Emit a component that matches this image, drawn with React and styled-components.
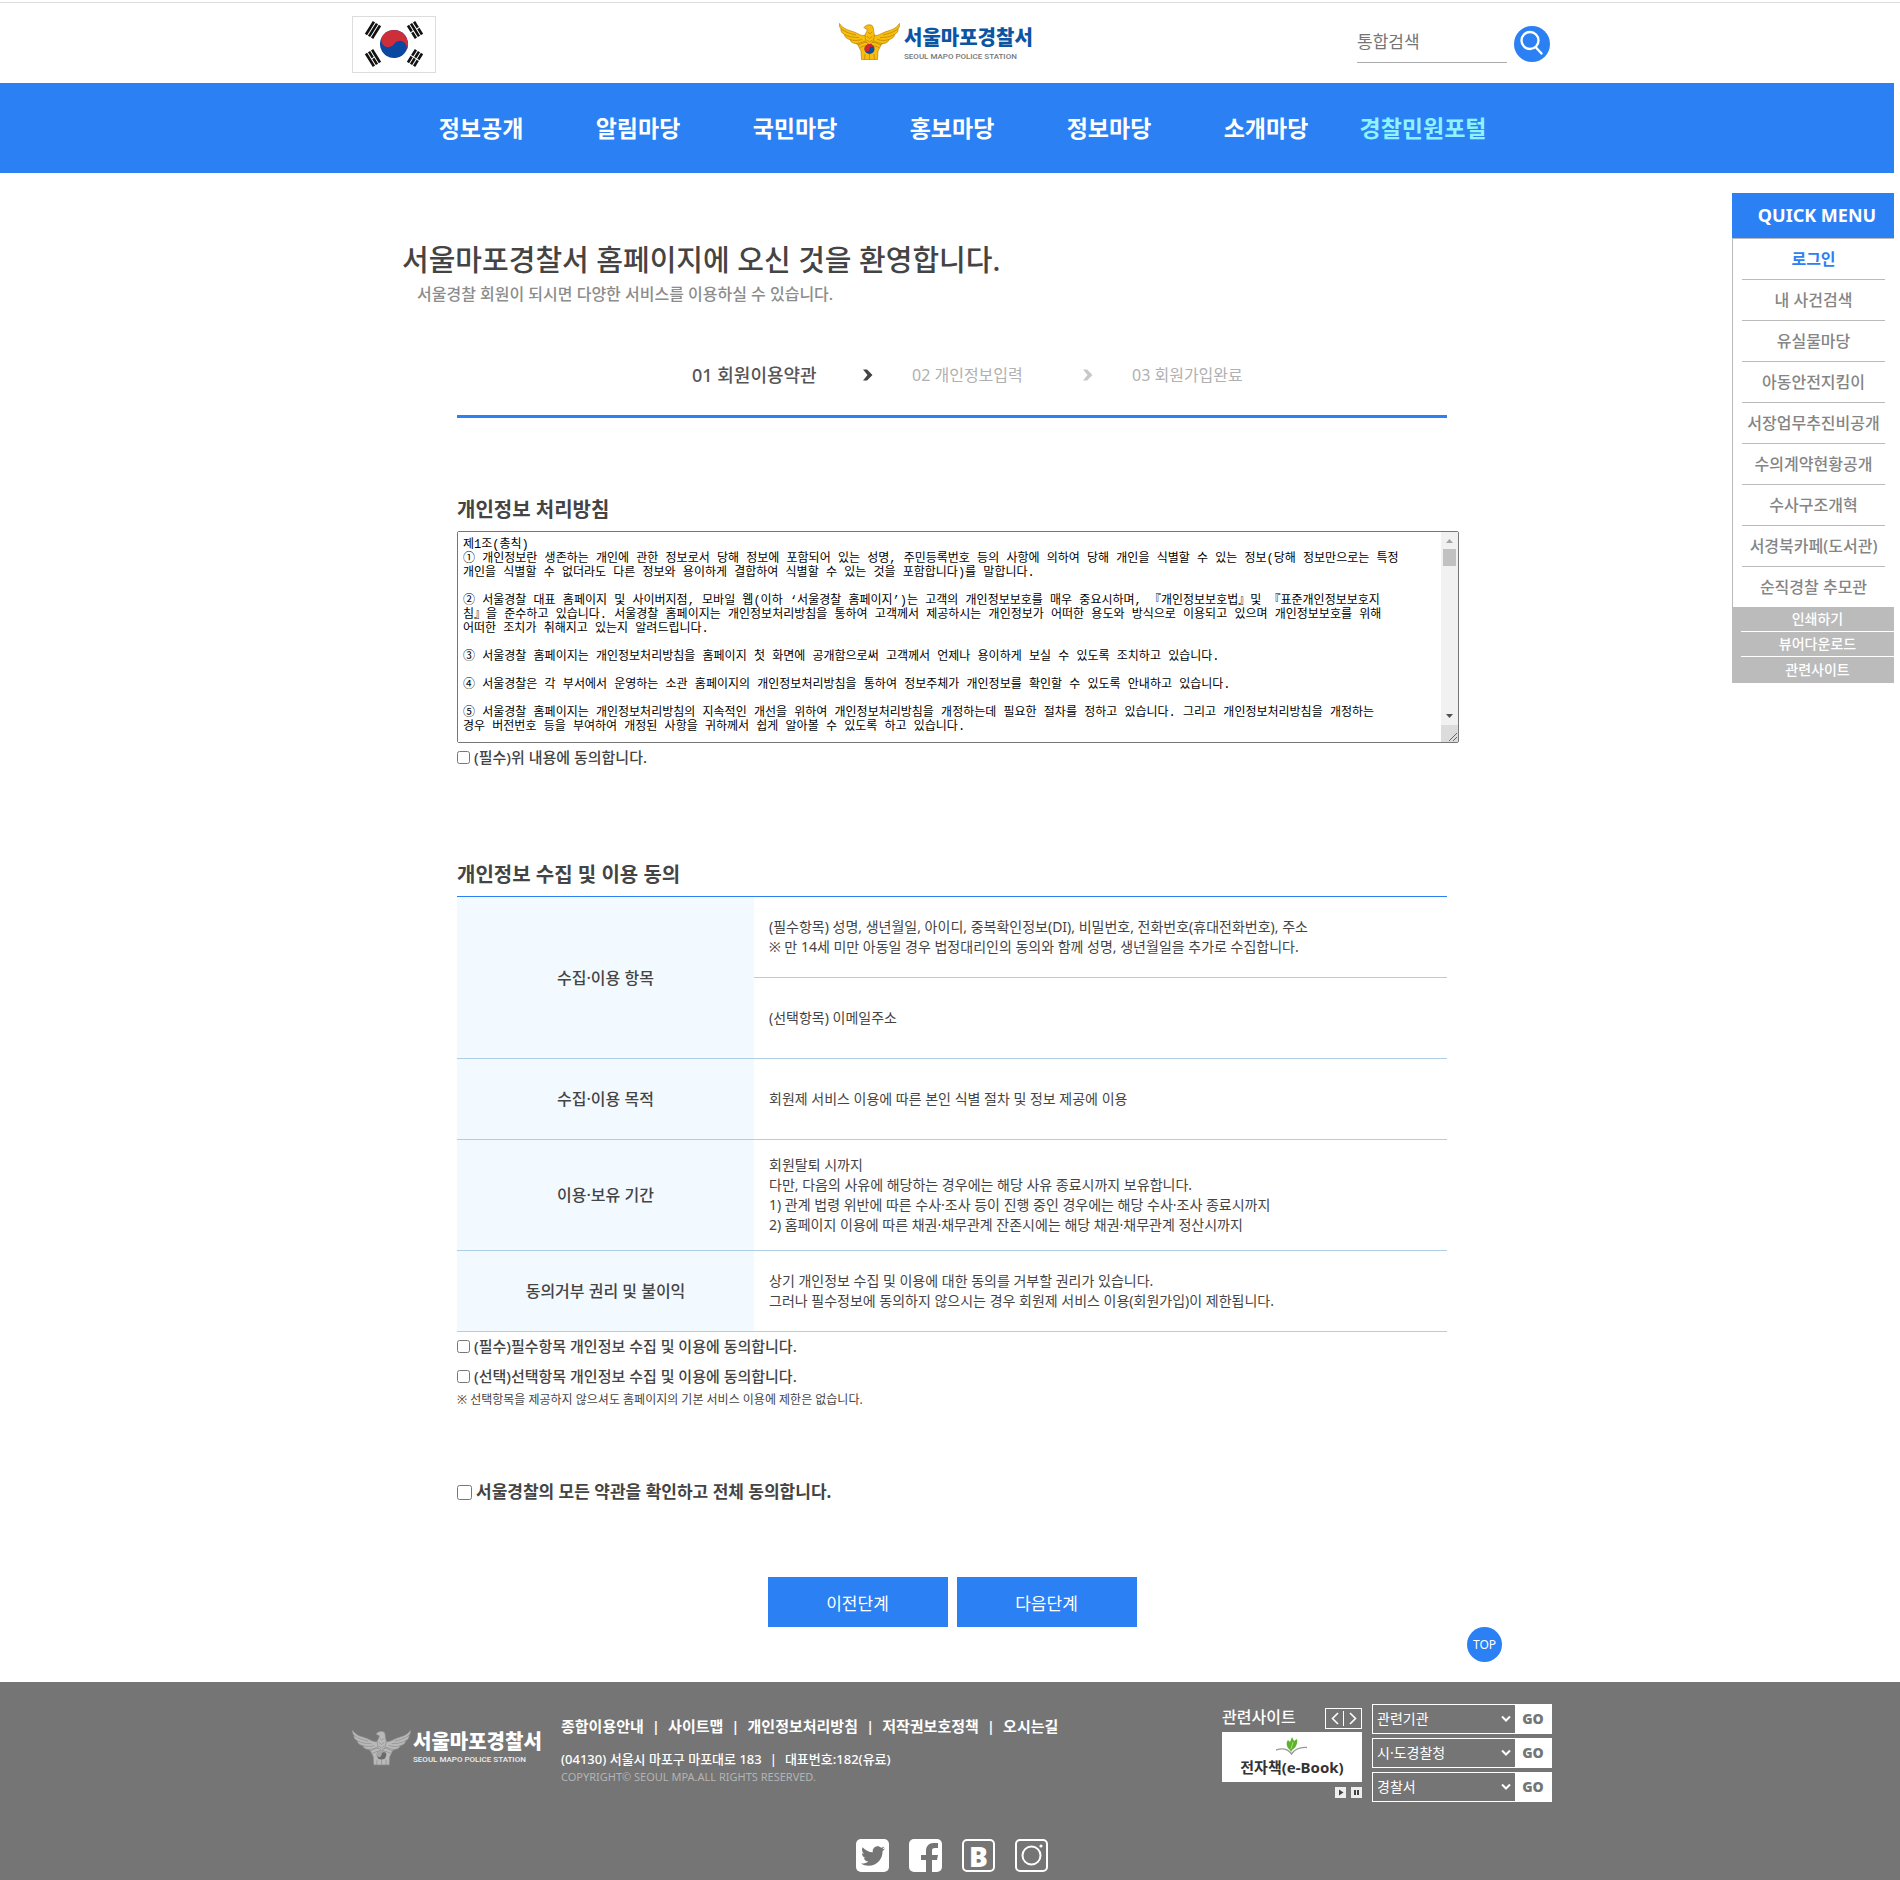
import React from "react";
import styled, { createGlobalStyle } from "styled-components";
import { FaTwitter } from "react-icons/fa";

const blue = "#2b80f3";
const slate = "#757575";
const sans = `"Noto Sans", "Noto Sans CJK KR", sans-serif`;

const GlobalStyle = createGlobalStyle`
  *, *::before, *::after { box-sizing: border-box; }
  body { margin: 0; background: #fff; color: #444; font-family: ${sans}; font-size: 14px; }
  a { color: inherit; text-decoration: none; }
  ul, h1, h2, h3, p { margin: 0; padding: 0; }
  ul { list-style: none; }
  button, input, select, textarea { font-family: inherit; margin: 0; border-radius: 0; }
  button { cursor: pointer; border: 0; padding: 0; }
`;

const Page = styled.div`
  position: relative;
  padding-top: 2px;
`;

const Inner = styled.div`
  width: 100%;
  max-width: 1204px;
  margin: 0 auto;
  padding-left: 4px;
`;

/* ---------- header ---------- */

const Header = styled.header`
  border-top: 1px solid #dcdcdc;
`;

const HeaderRow = styled(Inner)`
  display: grid;
  grid-template-columns: 487px 1fr auto;
  align-items: start;
  height: 80px;
`;

const FlagBox = styled.div`
  width: 84px;
  height: 57px;
  margin-top: 13px;
  border: 1px solid #dcdcdc;
  svg { display: block; }
`;

const Brand = styled.a`
  display: flex;
  gap: ${(p) => (p.$footer ? 2 : 4)}px;
  margin-top: ${(p) => (p.$footer ? 25 : 20)}px;
  color: ${(p) => (p.$footer ? "#fff" : "#0b55a3")};
  svg { flex: none; }
`;

const BrandText = styled.span`
  display: flex;
  flex-direction: column;
  white-space: nowrap;
`;

const BrandName = styled.strong`
  font-size: 20px;
  line-height: ${(p) => (p.$footer ? 26 : 29)}px;
  font-weight: 800;
`;

const BrandSub = styled.span`
  font-family: Roboto, sans-serif;
  font-size: 8px;
  line-height: 10px;
  font-weight: 500;
  color: ${(p) => (p.$footer ? "#eee" : "#777")};
`;

const Search = styled.form`
  display: flex;
  justify-content: flex-end;
  gap: 7px;
  margin-top: 23px;
  padding-right: 2px;
`;

const SearchInput = styled.input`
  width: 150px;
  height: 37px;
  padding: 0 0 5px;
  border: 0;
  border-bottom: 1px solid #aaa;
  background: none;
  font-size: 17px;
  &::placeholder { color: #757575; opacity: 1; }
`;

const SearchButton = styled.button`
  width: 36px;
  height: 36px;
  border-radius: 50%;
  background: ${blue};
  svg { display: block; }
`;

const Nav = styled.nav`
  background: linear-gradient(${blue}, ${blue}) 0 0 / calc(100% - 6px) 100% no-repeat;
`;

const NavList = styled.ul`
  display: grid;
  grid-template-columns: repeat(7, 157px);
  justify-content: center;
`;

const NavLink = styled.a`
  display: block;
  text-align: center;
  font-size: 23px;
  line-height: 90px;
  font-weight: 600;
  color: ${(p) => (p.$accent ? "#8df3ff" : "#fff")};
`;

/* ---------- quick menu ---------- */

const Quick = styled.aside`
  position: absolute;
  top: 193px;
  right: 6px;
  width: 162px;
  text-align: center;
`;

const QuickTitle = styled.h2`
  padding-left: 8px;
  background: ${blue};
  color: #fff;
  font-size: 18px;
  line-height: 45px;
  font-weight: 700;
`;

const QuickList = styled.ul`
  padding: 0 9px;
  border-left: 1px solid #bbb;
  border-top: 1px solid #bbb;
  background: #fff;
`;

const QuickItem = styled.li`
  border-bottom: 1px solid #bbb;
  font-size: 16px;
  line-height: 40px;
  font-weight: ${(p) => (p.$active ? 700 : 500)};
  color: ${(p) => (p.$active ? blue : "#858585")};
  white-space: nowrap;
  &:last-child { border-bottom: 0; }
`;

const QuickTools = styled.ul`
  padding-left: 9px;
  background: #bbb;
  color: #fff;
`;

const QuickTool = styled.li`
  border-bottom: 1px solid #fff;
  font-size: 14px;
  line-height: 24px;
  font-weight: 500;
  &:last-child { border-bottom: 0; line-height: 26px; }
`;

/* ---------- main ---------- */

const Intro = styled.div`
  padding: 67px 50px 0;
`;

const Title = styled.h1`
  font-size: 29px;
  line-height: 40px;
  font-weight: 500;
`;

const Lead = styled.p`
  padding-left: 15px;
  font-size: 16px;
  line-height: 28px;
  font-weight: 500;
  color: #8c8c8c;
`;

const Content = styled.div`
  margin: 55px 105px 0;
`;

const Steps = styled.ol`
  display: flex;
  margin: 0;
  padding: 0 0 28px 235px;
  list-style: none;
  border-bottom: 3px solid ${blue};
`;

const Step = styled.li`
  display: flex;
  align-items: center;
  justify-content: space-between;
  width: ${(p) => (p.$last ? "auto" : "220px")};
  padding-right: ${(p) => (p.$last ? 0 : 39)}px;
  font-size: ${(p) => (p.$active ? 18 : 16)}px;
  line-height: 24px;
  font-weight: ${(p) => (p.$active ? 500 : 400)};
  color: ${(p) => (p.$active ? "#555" : "#b0b0b0")};
  white-space: nowrap;
`;

const Section = styled.section`
  padding-top: ${(p) => p.$gap}px;
`;

const SectionTitle = styled.h2`
  margin-bottom: 6px;
  font-size: 20px;
  line-height: 30px;
  font-weight: 600;
`;

const TermsBox = styled.div`
  display: flex;
  height: 212px;
  margin-right: -12px;
  border: 1px solid #767676;
  border-radius: 2px;
`;

const Terms = styled.textarea`
  flex: 1;
  min-width: 0;
  padding: 6px 5px;
  border: 0;
  outline: 0;
  resize: none;
  overflow: hidden;
  background: #fff;
  color: #000;
  font-family: "Liberation Mono", "Noto Sans CJK KR", monospace;
  font-size: 12px;
  line-height: 14px;
  white-space: pre;
`;

const ScrollTrack = styled.div`
  display: flex;
  flex-direction: column;
  align-items: center;
  width: 17px;
  background: #f1f1f1;
  svg { flex: none; display: block; }
`;

const ScrollThumb = styled.div`
  width: 13px;
  height: 17px;
  margin-bottom: auto;
  background: #c1c1c1;
`;

const Check = styled.label`
  display: flex;
  align-items: center;
  gap: 4px;
  font-size: 15px;
  line-height: 28px;
  height: 30px;
  padding-bottom: 2px;
  font-weight: 500;
  input { flex: none; width: 13px; height: 13px; }
`;

const CheckAll = styled(Check)`
  margin-top: 70px;
  gap: 4px;
  font-size: 17px;
  font-weight: 700;
  input { width: 15px; height: 15px; }
`;

const Table = styled.table`
  width: 100%;
  border-spacing: 0;
  border-top: 1px solid ${blue};
  th, td { border-bottom: 1px solid #aed0e6; }
`;

const HeadCell = styled.th`
  width: 30%;
  padding: 0 0 2px;
  background: #f2f9ff;
  font-size: 16px;
  font-weight: 500;
`;

const Cell = styled.td`
  height: ${(p) => (p.$tall ? 111 : 81)}px;
  padding: 0 15px;
  font-size: 14px;
  line-height: 20px;
  font-weight: 400;
`;

const Note = styled.p`
  font-size: 12px;
  line-height: 16px;
`;

const Actions = styled.div`
  display: flex;
  justify-content: center;
  gap: 9px;
  margin-top: 69px;
`;

const ActionButton = styled.button`
  width: 180px;
  height: 50px;
  background: ${blue};
  color: #fff;
  font-size: 17px;
`;

const TopRow = styled.div`
  display: flex;
  justify-content: flex-end;
  padding: 0 50px 20px;
`;

const TopLink = styled.a`
  width: 35px;
  height: 35px;
  border-radius: 50%;
  background: ${blue};
  color: #fff;
  text-align: center;
  font-size: 12px;
  line-height: 35px;
`;

/* ---------- footer ---------- */

const Footer = styled.footer`
  background: ${slate};
  color: #fff;
`;

const FooterRow = styled(Inner)`
  display: flex;
  padding-top: 22px;
`;

const FooterBrand = styled.div`
  width: 209px;
`;

const FooterInfo = styled.div`
  flex: 1;
  padding-top: 7px;
`;

const Divided = styled.ul`
  display: flex;
  li + li::before { content: "|"; margin: 0 8px; }
`;

const FooterLinks = styled(Divided)`
  font-size: 15px;
  line-height: 30px;
  font-weight: 600;
`;

const Address = styled(Divided)`
  margin-top: 8px;
  font-size: 13px;
  line-height: 20px;
  font-weight: 500;
`;

const Copyright = styled.p`
  color: #b4b4b4;
  font-size: 11px;
  line-height: 15px;
`;

const Related = styled.div`
  width: 140px;
  margin-right: 10px;
`;

const RelatedHead = styled.div`
  display: flex;
  align-items: center;
  justify-content: space-between;
  height: 28px;
  h3 { padding-bottom: 2px; font-size: 16px; line-height: 24px; font-weight: 500; }
`;

const Pager = styled.div`
  display: flex;
  align-items: center;
  width: 37px;
  height: 21px;
  border: 1px solid #fff;
`;

const PagerButton = styled.button`
  flex: 1;
  height: 15px;
  background: none;
  color: #fff;
  & + & { border-left: 1px solid #fff; }
  svg { display: block; margin: auto; }
`;

const EBook = styled.a`
  display: flex;
  flex-direction: column;
  align-items: center;
  height: 50px;
  padding-top: 5px;
  background: #fff;
  color: #333;
  font-size: 15px;
  line-height: 24px;
  font-weight: 700;
`;

const Player = styled.div`
  display: flex;
  justify-content: flex-end;
  gap: 5px;
  margin-top: 5px;
`;

const PlayerButton = styled.button`
  width: 11px;
  height: 11px;
  background: #eee;
  svg { display: block; }
`;

const Jumps = styled.div`
  display: grid;
  gap: 4px;
  width: 180px;
`;

const Jump = styled.form`
  position: relative;
  display: flex;
  height: 30px;
  border: 1px solid #fff;
  svg { position: absolute; right: 40px; top: 10px; pointer-events: none; }
`;

const JumpSelect = styled.select`
  flex: 1;
  min-width: 0;
  appearance: none;
  padding: 0 4px 1px;
  border: 0;
  background: ${slate};
  color: #fff;
  font-size: 14px;
`;

const JumpButton = styled.button`
  width: 36px;
  padding-bottom: 2px;
  background: #fff;
  color: ${slate};
  font-family: "Open Sans", sans-serif;
  font-size: 14px;
  font-weight: 800;
`;

const Social = styled.div`
  display: flex;
  justify-content: center;
  gap: 20px;
  padding: 37px 0 8px;
`;

const SocialLink = styled.a`
  display: flex;
  align-items: ${(p) => (p.$corner ? "flex-end" : "center")};
  justify-content: ${(p) => (p.$corner ? "flex-end" : "center")};
  width: 33px;
  height: 33px;
  padding-right: ${(p) => (p.$corner ? 4 : 0)}px;
  border-radius: 5px;
  border: ${(p) => (p.$outline ? "2px solid #fff" : "0")};
  background: ${(p) => (p.$outline ? "none" : "#fff")};
  color: ${(p) => (p.$outline ? "#fff" : slate)};
  font-family: "Open Sans", sans-serif;
  font-size: 28px;
  font-weight: 800;
`;

/* ---------- drawings ---------- */

function Trigram({ x, y, angle, bars }) {
  return (
    <g transform={`translate(${x} ${y}) rotate(${angle})`} fill="#111">
      {bars.map((solid, i) => {
        const top = (i - 1) * 3.6 - 1.3;
        return solid ? (
          <rect key={i} x="-7.500" y={top} width="15" height="2.600" />
        ) : (
          <g key={i}>
            <rect x="-7.500" y={top} width="7" height="2.600" />
            <rect x="0.500" y={top} width="7" height="2.600" />
          </g>
        );
      })}
    </g>
  );
}

function Flag() {
  return (
    <svg width="82" height="55" viewBox="-41 -27 82 55" role="img" aria-label="태극기">
      <g transform="rotate(33.7)">
        <circle r="14" fill="#0a47a0" />
        <path d="M-14 0A14 14 0 0 1 14 0A7 7 0 0 0 0 0A7 7 0 0 1-14 0Z" fill="#cd2e3a" />
      </g>
      <Trigram x={-21} y={-14} angle={-58} bars={[1, 1, 1]} />
      <Trigram x={21} y={-14} angle={58} bars={[0, 1, 0]} />
      <Trigram x={-21} y={14} angle={58} bars={[1, 0, 1]} />
      <Trigram x={21} y={14} angle={-58} bars={[0, 0, 0]} />
    </svg>
  );
}

function Eagle({ mono }) {
  const fill = mono ? "#b9b9b9" : "#f9bd0b";
  const line = mono ? "#8c8c8c" : "#b5820f";
  const wing = (
    <g>
      <path d="M0.500 0.500C4 6 9 7 15 9C19 10.500 22 13 25 12.500L28 12L30.500 22L24.500 20.500C22 22.500 18.500 22.500 17 20.500C14 20.500 11.500 19 11 16.500C8 16 5.500 14 5.500 11.500C3 10.500 1.500 8 2 6C0.500 4 0 2 0.500 0.500Z" />
      <path d="M2 6C7 9.500 12 11 17 12M5.500 11.500C10 14 15 14.500 20 14.500M11 16.500C15 18 19 17.500 23 16.500M17 20.500C20 20.500 23 19.500 26 18" fill="none" />
    </g>
  );
  return (
    <svg width={mono ? 59 : 61} height="37" viewBox="0 0 61 37" aria-hidden="true">
      <g fill={fill} stroke={line} strokeWidth="0.700" strokeLinejoin="round">
        {wing}
        <g transform="translate(61 0) scale(-1 1)">{wing}</g>
        <path d="M19 22L25 19.500H36L42 22L39 28L38.500 36.500H22.500L22 28Z" />
        <path d="M26 31L25.500 36.500M30.500 31V36.500M35 31L35.500 36.500M21 24.500L26 22.500M40 24.500L35 22.500" fill="none" />
        <path d="M26 12C27 9.500 28.500 8 28 6C26.500 5.500 25.500 5.500 25 4.500C26.500 2 30.500 1 33 2.500C35 4 34 8 35.500 12L34 19L30.500 21.500L27 19Z" />
        <path d="M29 9L31 11L33 9M28 13L30.500 15.500L33.500 13M28 17L30.500 19L33.500 17" fill="none" />
      </g>
      <circle cx="30.500" cy="26" r="5" fill={mono ? "#6a6a6a" : "#0a4fa0"} />
      <path d="M25.500 26A5 5 0 0 1 35.500 26A2.500 2.500 0 0 0 30.500 26A2.500 2.500 0 0 1 25.500 26Z" fill={mono ? "#a5a5a5" : "#d8232f"} />
    </svg>
  );
}

function Logo({ footer }) {
  return (
    <Brand href="#home" $footer={footer}>
      <Eagle mono={footer} />
      <BrandText>
        <BrandName $footer={footer}>서울마포경찰서</BrandName>
        <BrandSub $footer={footer}>SEOUL MAPO POLICE STATION</BrandSub>
      </BrandText>
    </Brand>
  );
}

function Chevron({ color }) {
  return (
    <svg width="10" height="12" viewBox="0 0 10 12" aria-hidden="true">
      <path d="M0 0.500H4L9.500 6L4 11.500H0L4.500 6Z" fill={color} />
    </svg>
  );
}

/* ---------- data ---------- */

const menu = ["정보공개", "알림마당", "국민마당", "홍보마당", "정보마당", "소개마당", "경찰민원포털"];
const quickItems = [
  "로그인", "내 사건검색", "유실물마당", "아동안전지킴이", "서장업무추진비공개",
  "수의계약현황공개", "수사구조개혁", "서경북카페(도서관)", "순직경찰 추모관",
];
const quickTools = ["인쇄하기", "뷰어다운로드", "관련사이트"];
const footerLinks = ["종합이용안내", "사이트맵", "개인정보처리방침", "저작권보호정책", "오시는길"];
const jumps = ["관련기관", "시·도경찰청", "경찰서"];

const terms = `제1조(총칙)
① 개인정보란 생존하는 개인에 관한 정보로서 당해 정보에 포함되어 있는 성명, 주민등록번호 등의 사항에 의하여 당해 개인을 식별할 수 있는 정보(당해 정보만으로는 특정
개인을 식별할 수 없더라도 다른 정보와 용이하게 결합하여 식별할 수 있는 것을 포함합니다)를 말합니다.

② 서울경찰 대표 홈페이지 및 사이버지점, 모바일 웹(이하 ‘서울경찰 홈페이지’)는 고객의 개인정보보호를 매우 중요시하며, 『개인정보보호법』및 『표준개인정보보호지
침』을 준수하고 있습니다. 서울경찰 홈페이지는 개인정보처리방침을 통하여 고객께서 제공하시는 개인정보가 어떠한 용도와 방식으로 이용되고 있으며 개인정보보호를 위해
어떠한 조치가 취해지고 있는지 알려드립니다.

③ 서울경찰 홈페이지는 개인정보처리방침을 홈페이지 첫 화면에 공개함으로써 고객께서 언제나 용이하게 보실 수 있도록 조치하고 있습니다.

④ 서울경찰은 각 부서에서 운영하는 소관 홈페이지의 개인정보처리방침을 통하여 정보주체가 개인정보를 확인할 수 있도록 안내하고 있습니다.

⑤ 서울경찰 홈페이지는 개인정보처리방침의 지속적인 개선을 위하여 개인정보처리방침을 개정하는데 필요한 절차를 정하고 있습니다. 그리고 개인정보처리방침을 개정하는
경우 버전번호 등을 부여하여 개정된 사항을 귀하께서 쉽게 알아볼 수 있도록 하고 있습니다.`;

export default function App() {
  return (
    <Page>
      <GlobalStyle />
      <Header>
        <HeaderRow>
          <FlagBox><Flag /></FlagBox>
          <Logo />
          <Search>
            <SearchInput type="text" placeholder="통합검색" aria-label="통합검색" />
            <SearchButton type="button" aria-label="검색">
              <svg width="36" height="36" viewBox="0 0 36 36" fill="none" stroke="#fff" strokeWidth="2.400" strokeLinecap="round">
                <circle cx="16" cy="14.500" r="8.500" />
                <path d="M22 21.500L27.500 27.500" />
              </svg>
            </SearchButton>
          </Search>
        </HeaderRow>
      </Header>
      <Nav>
        <Inner>
          <NavList>
            {menu.map((name, i) => (
              <li key={name}><NavLink href="#menu" $accent={i === 6}>{name}</NavLink></li>
            ))}
          </NavList>
        </Inner>
      </Nav>

      <Inner as="main">
        <Intro>
          <Title>서울마포경찰서 홈페이지에 오신 것을 환영합니다.</Title>
          <Lead>서울경찰 회원이 되시면 다양한 서비스를 이용하실 수 있습니다.</Lead>
        </Intro>
        <Content>
          <Steps>
            <Step $active>01 회원이용약관<Chevron color="#444" /></Step>
            <Step>02 개인정보입력<Chevron color="#c8c8c8" /></Step>
            <Step $last>03 회원가입완료</Step>
          </Steps>

          <Section $gap={77}>
            <SectionTitle id="terms-title">개인정보 처리방침</SectionTitle>
            <TermsBox>
              <Terms readOnly aria-labelledby="terms-title" value={terms} />
              <ScrollTrack aria-hidden="true">
                <svg width="17" height="17"><path d="M5 11L8.500 7L12 11Z" fill="#a3a3a3" /></svg>
                <ScrollThumb />
                <svg width="17" height="17"><path d="M5 6L8.500 10L12 6Z" fill="#505050" /></svg>
                <svg width="17" height="17">
                  <rect width="17" height="17" fill="#dcdcdc" />
                  <path d="M8 16L16 8M12 16L16 12" stroke="#666" fill="none" />
                </svg>
              </ScrollTrack>
            </TermsBox>
            <Check><input type="checkbox" />(필수)위 내용에 동의합니다.</Check>
          </Section>

          <Section $gap={87}>
            <SectionTitle>개인정보 수집 및 이용 동의</SectionTitle>
            <Table>
              <tbody>
                <tr>
                  <HeadCell scope="rowgroup" rowSpan={2}>수집·이용 항목</HeadCell>
                  <Cell>
                    (필수항목) 성명, 생년월일, 아이디, 중복확인정보(DI), 비밀번호, 전화번호(휴대전화번호), 주소<br />
                    ※ 만 14세 미만 아동일 경우 법정대리인의 동의와 함께 성명, 생년월일을 추가로 수집합니다.
                  </Cell>
                </tr>
                <tr><Cell>(선택항목) 이메일주소</Cell></tr>
                <tr>
                  <HeadCell scope="row">수집·이용 목적</HeadCell>
                  <Cell>회원제 서비스 이용에 따른 본인 식별 절차 및 정보 제공에 이용</Cell>
                </tr>
                <tr>
                  <HeadCell scope="row">이용·보유 기간</HeadCell>
                  <Cell $tall>
                    회원탈퇴 시까지<br />
                    다만, 다음의 사유에 해당하는 경우에는 해당 사유 종료시까지 보유합니다.<br />
                    1) 관계 법령 위반에 따른 수사·조사 등이 진행 중인 경우에는 해당 수사·조사 종료시까지<br />
                    2) 홈페이지 이용에 따른 채권·채무관계 잔존시에는 해당 채권·채무관계 정산시까지
                  </Cell>
                </tr>
                <tr>
                  <HeadCell scope="row">동의거부 권리 및 불이익</HeadCell>
                  <Cell>
                    상기 개인정보 수집 및 이용에 대한 동의를 거부할 권리가 있습니다.<br />
                    그러나 필수정보에 동의하지 않으시는 경우 회원제 서비스 이용(회원가입)이 제한됩니다.
                  </Cell>
                </tr>
              </tbody>
            </Table>
            <Check><input type="checkbox" />(필수)필수항목 개인정보 수집 및 이용에 동의합니다.</Check>
            <Check><input type="checkbox" />(선택)선택항목 개인정보 수집 및 이용에 동의합니다.</Check>
            <Note>※ 선택항목을 제공하지 않으셔도 홈페이지의 기본 서비스 이용에 제한은 없습니다.</Note>
          </Section>

          <CheckAll><input type="checkbox" />서울경찰의 모든 약관을 확인하고 전체 동의합니다.</CheckAll>
          <Actions>
            <ActionButton type="button">이전단계</ActionButton>
            <ActionButton type="button">다음단계</ActionButton>
          </Actions>
        </Content>
        <TopRow><TopLink href="#top">TOP</TopLink></TopRow>
      </Inner>

      <Quick>
        <QuickTitle>QUICK MENU</QuickTitle>
        <QuickList>
          {quickItems.map((name, i) => (
            <QuickItem key={name} $active={i === 0}><a href="#quick">{name}</a></QuickItem>
          ))}
        </QuickList>
        <QuickTools>
          {quickTools.map((name) => (
            <QuickTool key={name}><a href="#tool">{name}</a></QuickTool>
          ))}
        </QuickTools>
      </Quick>

      <Footer>
        <FooterRow>
          <FooterBrand><Logo footer /></FooterBrand>
          <FooterInfo>
            <FooterLinks>
              {footerLinks.map((name) => <li key={name}><a href="#info">{name}</a></li>)}
            </FooterLinks>
            <Address>
              <li>(04130) 서울시 마포구 마포대로 183</li>
              <li>대표번호:182(유료)</li>
            </Address>
            <Copyright>COPYRIGHT© SEOUL MPA.ALL RIGHTS RESERVED.</Copyright>
          </FooterInfo>
          <Related>
            <RelatedHead>
              <h3>관련사이트</h3>
              <Pager>
                <PagerButton type="button" aria-label="이전">
                  <svg width="8" height="13" fill="none" stroke="currentColor" strokeWidth="1.600"><path d="M7 1L1.500 6.500L7 12" /></svg>
                </PagerButton>
                <PagerButton type="button" aria-label="다음">
                  <svg width="8" height="13" fill="none" stroke="currentColor" strokeWidth="1.600"><path d="M1 1L6.500 6.500L1 12" /></svg>
                </PagerButton>
              </Pager>
            </RelatedHead>
            <EBook href="#ebook">
              <svg width="32" height="18" viewBox="0 0 32 18" aria-hidden="true">
                <path d="M0 13C6 11 12 12 15.500 17C19 12 25 10 31 10.500" fill="none" stroke="#9a9a9a" strokeWidth="1.400" />
                <path d="M14 13C10 10 10 5 12 3L14 5L16 0L18 4L21 2C22 6 20 11 16 13L15 15Z" fill="#5db32c" />
                <path d="M15 12L17 5" stroke="#a8df73" fill="none" />
              </svg>
              전자책(e-Book)
            </EBook>
            <Player>
              <PlayerButton type="button" aria-label="재생">
                <svg width="11" height="11"><path d="M4 2.500L8.500 5.500L4 8.500Z" fill="#444" /></svg>
              </PlayerButton>
              <PlayerButton type="button" aria-label="정지">
                <svg width="11" height="11"><path d="M3 3H5V8H3ZM6 3H8V8H6Z" fill="#444" /></svg>
              </PlayerButton>
            </Player>
          </Related>
          <Jumps>
            {jumps.map((name) => (
              <Jump key={name}>
                <JumpSelect aria-label={name}><option>{name}</option></JumpSelect>
                <svg width="10" height="8" fill="none" stroke="#fff" strokeWidth="2"><path d="M1 1.500L5 5.500L9 1.500" /></svg>
                <JumpButton type="button">GO</JumpButton>
              </Jump>
            ))}
          </Jumps>
        </FooterRow>
        <Inner>
          <Social>
            <SocialLink href="#twitter" aria-label="트위터"><FaTwitter size={24} /></SocialLink>
            <SocialLink href="#facebook" aria-label="페이스북" $corner>
              <svg width="18" height="29" viewBox="0 0 18 29" fill="currentColor" aria-hidden="true">
                <path d="M6 29V17H1V12H6V8C6 3 9 0 13.500 0H18V5H15C12.500 5 12 6 12 8V12H18L17 17H12V29Z" />
              </svg>
            </SocialLink>
            <SocialLink href="#blog" $outline>B</SocialLink>
            <SocialLink href="#instagram" aria-label="인스타그램" $outline>
              <svg width="29" height="29" viewBox="0 0 29 29" fill="none" stroke="#fff" strokeWidth="2" aria-hidden="true">
                <circle cx="14.500" cy="14.500" r="9" />
                <circle cx="24" cy="5" r="1.600" fill="#fff" stroke="none" />
              </svg>
            </SocialLink>
          </Social>
        </Inner>
      </Footer>
    </Page>
  );
}
